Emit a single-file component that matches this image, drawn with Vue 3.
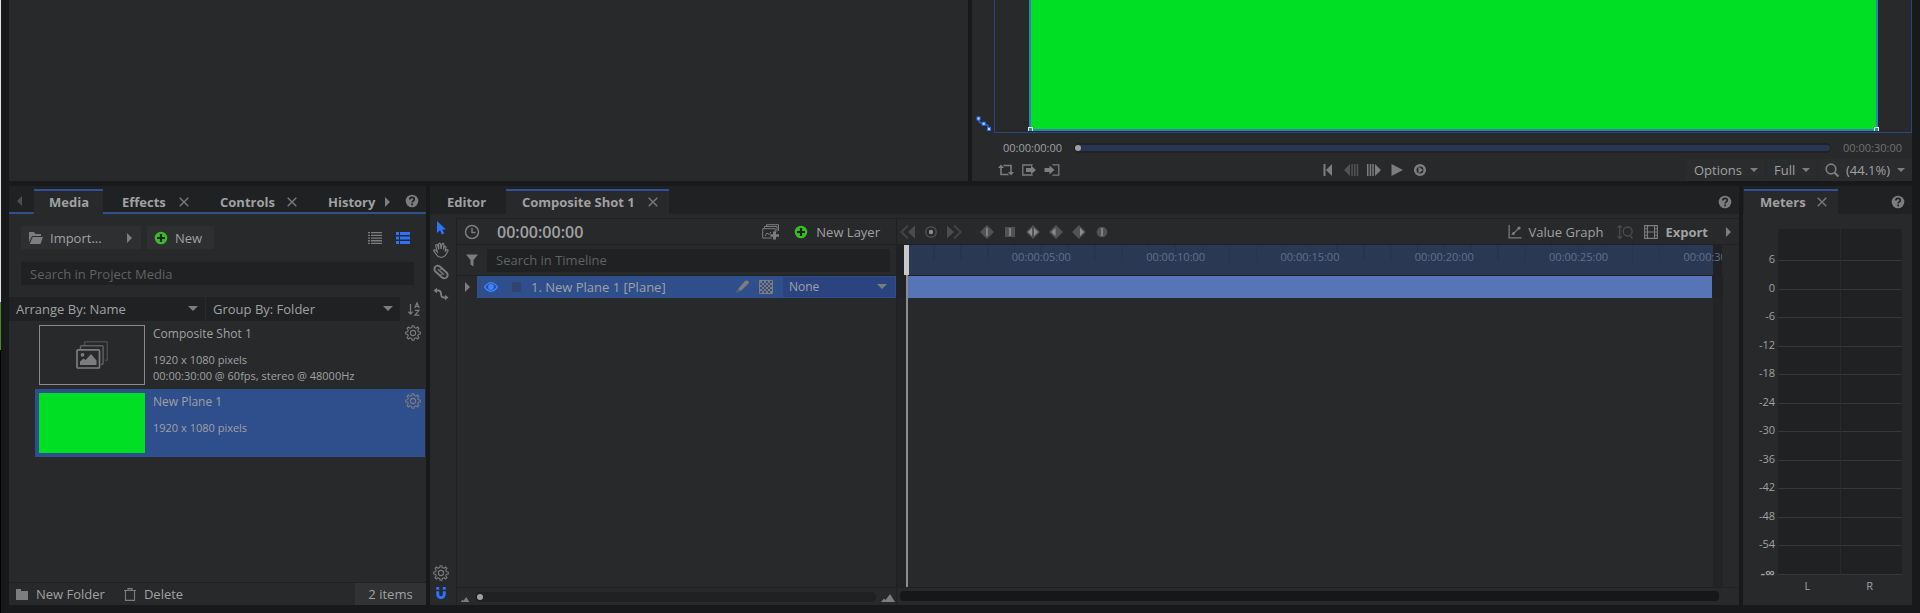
<script setup>
import { ref } from 'vue'

const mediaSearch = ref('')
const layerSearch = ref('')

const tools = ['pointer', 'hand', 'link', 'curve']
const keyIcons = ['key-linear', 'key-hold', 'key-smooth', 'key-in', 'key-out', 'key-auto']
const playIcons = [
  { id: 'to-start', label: 'Go to start' },
  { id: 'step-back', label: 'Previous frame', dim: true },
  { id: 'step-forward', label: 'Next frame' },
  { id: 'play', label: 'Play' },
  { id: 'loop-play', label: 'Playback mode' },
]
const rangeIcons = ['loop', 'set-in', 'set-out']
const rulerTimes = ['00:00:05:00', '00:00:10:00', '00:00:15:00', '00:00:20:00', '00:00:25:00', '00:00:30:00']
const levels = ['6', '0', '-6', '-12', '-18', '-24', '-30', '-36', '-42', '-48', '-54', '-∞']
</script>

<template>
  <svg class="defs" aria-hidden="true">
    <symbol id="caret-right" viewBox="0 0 6 10"><path d="M0 0 5 5 0 10z" /></symbol>
    <symbol id="caret-left" viewBox="0 0 6 10"><path d="M5 0 0 5 5 10z" /></symbol>
    <symbol id="caret-down" viewBox="0 0 10 6"><path d="M0 0h10L5 5z" /></symbol>
    <symbol id="close" viewBox="0 0 10 10"><path d="m.7.7 8.6 8.6m0-8.6L.7 9.3" fill="none" stroke="currentColor" stroke-width="1.4" /></symbol>
    <symbol id="help" viewBox="0 0 14 14"><circle cx="7" cy="7" r="6.3" /><path d="M4.8 5.5c0-3 4.5-2.8 4.5-.3 0 1.7-2.2 1.6-2.2 3.4M7.1 9.6v1.7" fill="none" stroke="#1f2123" stroke-width="1.7" /></symbol>
    <symbol id="plus" viewBox="0 0 14 14"><circle cx="7" cy="7" r="6.3" fill="#3cb928" /><path d="M7 3v8M3 7h8" fill="none" stroke="#1d2420" stroke-width="2.2" /></symbol>
    <symbol id="gear" viewBox="0 0 16 16">
      <g fill="none" stroke="currentColor" stroke-width="1.1" stroke-linejoin="round">
        <path d="M6.8 2.6 7 .7h2l.2 1.9 1.8.7L12.500 2 14 3.500l-1.300 1.500.7 1.800 1.900.2v2l-1.900.2-.7 1.800 1.300 1.500-1.500 1.500-1.500-1.300-1.800.7L9 15.300H7l-.2-1.900-1.800-.7L3.500 14 2 12.500 3.300 11l-.7-1.800L.7 9V7l1.900-.2L3.300 5 2 3.500 3.500 2 5 3.300z" />
        <circle cx="8" cy="8" r="2.6" />
      </g>
    </symbol>
    <symbol id="folder-open" viewBox="0 0 14 12"><path d="M0 0h5l1.500 2H12v2H3L0 10zM3.700 5H14l-2.500 7H.7z" /></symbol>
    <symbol id="folder" viewBox="0 0 12 11"><path d="M0 0h5v2h7v9H0z" /></symbol>
    <symbol id="trash" viewBox="0 0 12 13"><path d="M0 2.500h12M4 2.500V.6h4v1.900M1.500 2.500v9.900h9V2.500" fill="none" stroke="currentColor" stroke-width="1.1" /></symbol>
    <symbol id="list" viewBox="0 0 14 12"><path d="M0 0h2v1.300H0zM3 0h11v1.300H3zM0 2.700h2V4H0zM3 2.700h11V4H3zM0 5.400h2v1.300H0zM3 5.400h11v1.300H3zM0 8.100h2v1.300H0zM3 8.100h11v1.300H3zM0 10.700h2V12H0zM3 10.700h11V12H3z" /></symbol>
    <symbol id="rows" viewBox="0 0 14 12"><path d="M0 0h3v3H0zM4 0h10v3H4zM0 4.500h3v3H0zM4 4.500h10v3H4zM0 9h3v3H0zM4 9h10v3H4z" /></symbol>
    <symbol id="sort" viewBox="0 0 12 14"><path d="M2.500 2v10M.3 9.700l2.200 2.500 2.200-2.500M6.800 6 9 .8 11.200 6M7.500 4.400h3M7 8.300h4l-4 4.900h4.300" fill="none" stroke="currentColor" stroke-width="1.2" /></symbol>
    <symbol id="comp" viewBox="0 0 32 28">
      <g fill="none" stroke="currentColor">
        <path d="M8.500 4.500V1.700q0-1 1-1h20.800q1 0 1 1v16.600q0 1-1 1H29" opacity=".4" stroke-width="1.5" />
        <path d="M4.500 8V5.700q0-1 1-1h20.600q1 0 1 1v16.600q0 1-1 1H25" opacity=".65" stroke-width="1.5" />
        <rect x="1" y="8.800" width="22.500" height="18.200" rx="1" stroke-width="1.7" />
      </g>
      <circle cx="6.500" cy="13.800" r="1.9" /><path d="M4 24v-3.500l3.500-3 2 1.500 5.500-6 5.500 6.500V24z" />
    </symbol>
    <symbol id="pointer" viewBox="0 0 16 16"><path d="M4 1v12l3-2.700 1.800 4.200 2.400-1-1.900-4H13z" /></symbol>
    <symbol id="hand" viewBox="0 0 16 16"><path d="M5 14.500C3.800 12.800 2.200 11.200.9 9.200c-.6-1.300 1-1.900 1.900-.8l1.500 1.500-1.500-6c-.3-1.500 1.400-1.900 1.800-.5l1.200 3.800-.2-5c0-1.500 1.900-1.500 2 0l.3 4.800L9 2.300c.3-1.400 2-1.200 1.900.2l-.5 5 .8-2.600c.5-1.300 2-.7 1.700.6l-.8 4.100 1.200-1.500c1-.9 2.200 0 1.500 1.100l-2.600 4.500c-1.200 1.500-4 2-7.200.8z" fill="none" stroke="currentColor" stroke-width="1.2" /></symbol>
    <symbol id="link" viewBox="0 0 16 16"><g fill="none" stroke="currentColor" transform="rotate(42 8 8)"><rect x=".2" y="4.700" width="15.600" height="6.600" rx="3.300" stroke-width="1.9" /><path d="M3.800 8h8.400" stroke-width="1.5" /><path d="M6.200 4.500v2.300M9.800 9.200v2.300" stroke-width="1.2" /></g></symbol>
    <symbol id="curve" viewBox="0 0 16 16"><path d="M2.500 4.500h2.800q2 0 2.500 2l.5 3q.5 2 2.500 2h2" fill="none" stroke="currentColor" stroke-width="1.9" /><path d="M4 1.800v5.400L.5 4.500zM12 8.800v5.400l3.500-2.700z" /></symbol>
    <symbol id="magnet" viewBox="0 0 12 14"><path d="M2.500 4.500V8a3.500 3.500 0 0 0 7 0V4.500" fill="none" stroke="currentColor" stroke-width="3.2" /><path d="M.9 0h3.200v3H.9zM7.900 0h3.200v3H7.900z" /></symbol>
    <symbol id="clock" viewBox="0 0 16 16"><circle cx="8" cy="8" r="6.500" fill="none" stroke="currentColor" stroke-width="1.5" /><path d="M8 4v4.500h3.500" fill="none" stroke="currentColor" stroke-width="1.4" /></symbol>
    <symbol id="filter" viewBox="0 0 12 12"><path d="M0 0h12L7.500 5.500V12L4.500 10V5.500z" /></symbol>
    <symbol id="comp-add" viewBox="0 0 18 16"><path d="M4.500 2.500V.7h12v6M2.500 4.500v-2H15v5M9.500 14H.7V4.700h12.500V8M3 12l2-3 2 1.500L9 8" fill="none" stroke="currentColor" stroke-width="1" /><path d="M11 7.500h3v2.700h3v2.600h-3v2.700h-3v-2.700H8.300v-2.600H11z" /></symbol>
    <symbol id="eye" viewBox="0 0 14 10"><path d="M.6 5Q7-3.700 13.400 5 7 13.700.6 5z" fill="none" stroke="currentColor" stroke-width="1.3" /><circle cx="7" cy="5" r="2.9" /></symbol>
    <symbol id="brush" viewBox="0 0 14 14"><path d="m3 9 6.500-7.500Q11-.3 13 .8q1.600 1.500.2 3L5.800 11z" /><path d="m0 13.500 3-4.500 2.800 2z" opacity=".4" /></symbol>
    <symbol id="checker" viewBox="0 0 14 14">
      <path d="M.5.5h13v13H.5z" fill="none" stroke="currentColor" />
      <path d="M1 2h12M1 6h12M1 10h12" stroke="currentColor" stroke-width="2" stroke-dasharray="2 2" />
      <path d="M3 4h10M3 8h10M3 12h10" stroke="currentColor" stroke-width="2" stroke-dasharray="2 2" />
    </symbol>
    <symbol id="keys-prev" viewBox="0 0 16 16"><path d="M15 1.500v13L8 8z" /><path d="M8 1.500 1.500 8 8 14.500" fill="none" stroke="currentColor" stroke-width="2.4" opacity=".7" /></symbol>
    <symbol id="keys-next" viewBox="0 0 16 16"><path d="M1 1.500v13L8 8z" /><path d="M8 1.500 14.500 8 8 14.500" fill="none" stroke="currentColor" stroke-width="2.4" opacity=".7" /></symbol>
    <symbol id="keys-set" viewBox="0 0 16 16"><circle cx="8" cy="8" r="5.300" fill="none" stroke="currentColor" stroke-width="1.6" /><circle cx="8" cy="8" r="2.2" fill="#8c8d8e" /></symbol>
    <symbol id="key-linear" viewBox="0 0 16 16"><path d="m8 1 7 7-7 7-7-7z" /><path d="M7.200 4h1.600v8H7.200z" fill="#8c8d8e" /></symbol>
    <symbol id="key-hold" viewBox="0 0 16 16"><path d="M3 3h10v10H3z" /><path d="M7.200 4h1.600v8H7.200z" fill="#8c8d8e" /></symbol>
    <symbol id="key-smooth" viewBox="0 0 16 16"><path d="m8 1 7 7-7 7-7-7z" /><path d="M7 4v8L3 8zM9 4v8l4-4z" fill="#8c8d8e" /></symbol>
    <symbol id="key-in" viewBox="0 0 16 16"><path d="m8 1 7 7-7 7-7-7z" /><path d="M7.500 4v8l-4-4z" fill="#8c8d8e" /></symbol>
    <symbol id="key-out" viewBox="0 0 16 16"><path d="m8 1 7 7-7 7-7-7z" /><path d="M9 4v8l4-4z" fill="#8c8d8e" /></symbol>
    <symbol id="key-auto" viewBox="0 0 16 16"><circle cx="8" cy="8" r="5.3" /><path d="M7.200 4h1.600v8H7.200z" fill="#8c8d8e" /></symbol>
    <symbol id="graph" viewBox="0 0 14 15"><path d="M.7 0v13.700H14M3.500 10.500l2.300-1.800 5-5" fill="none" stroke="currentColor" stroke-width="1.3" /><circle cx="5.500" cy="9" r="1.5" /><circle cx="11.300" cy="3.300" r="1.8" /></symbol>
    <symbol id="fit" viewBox="0 0 15 14"><path d="M2.500 1v12M.4 3l2.100-2 2.100 2M.4 11l2.100 2 2.100-2M12.500 10.500l2 2.700" fill="none" stroke="currentColor" stroke-width="1.2" /><circle cx="10" cy="6.500" r="4.200" fill="none" stroke="currentColor" stroke-width="1.3" /></symbol>
    <symbol id="film" viewBox="0 0 14 14"><path d="M.6.6h12.800v12.800H.6zM3.500.5v13M10.500.5v13M3.500 7h7M.5 3.800h3M.5 7h3M.5 10.200h3M10.500 3.800h3M10.500 7h3M10.500 10.200h3" fill="none" stroke="currentColor" stroke-width="1.1" /></symbol>
    <symbol id="hill" viewBox="0 0 14 8"><path d="M0 8 3 4.500 4.500 6 9 0l5 8z" /></symbol>
    <symbol id="loop" viewBox="0 0 16 14"><path d="M5.500 2.500H13v7M10.500 11.500H3v-7" fill="none" stroke="currentColor" stroke-width="1.6" /><path d="M0 5 3 1.500 6 5zM10 9l3 3.500L16 9z" /></symbol>
    <symbol id="set-in" viewBox="0 0 16 14"><path d="M11 2.800V2H1.800v10H11v-.8" fill="none" stroke="currentColor" stroke-width="1.3" /><path d="M5 5h5V2.500L15 7l-5 4.500V9H5z" /></symbol>
    <symbol id="set-out" viewBox="0 0 16 14"><path d="M8.500 1.800h6.300v10.400H8.500" fill="none" stroke="currentColor" stroke-width="1.3" /><path d="M.5 5h5V2.500l5 4.500-5 4.500V9h-5z" /></symbol>
    <symbol id="to-start" viewBox="0 0 16 16"><path d="M3.500 2h2v12h-2zM12 2v12L6 8z" /></symbol>
    <symbol id="step-back" viewBox="0 0 16 16"><path d="M7 2v12L1 8zM8.300 2h1.500v12H8.300zM11 2h1.500v12H11zM13.700 2h1.500v12h-1.500z" /></symbol>
    <symbol id="step-forward" viewBox="0 0 16 16"><path d="M9 2v12l6-6zM1 2h1.500v12H1zM3.700 2h1.500v12H3.700zM6.300 2h1.500v12H6.300z" /></symbol>
    <symbol id="play" viewBox="0 0 16 16"><path d="M2.500 2v12L14 8z" /></symbol>
    <symbol id="loop-play" viewBox="0 0 16 16"><circle cx="8" cy="8" r="4.800" fill="none" stroke="currentColor" stroke-width="2.6" /><path d="M6.500 4.800v6.400L11 8z" /></symbol>
    <symbol id="magnifier" viewBox="0 0 14 14"><circle cx="6" cy="6" r="4.800" fill="none" stroke="currentColor" stroke-width="1.7" /><path d="m9.500 9.500 4 4" stroke="currentColor" stroke-width="2.2" /></symbol>
    <symbol id="motion" viewBox="0 0 16 16"><path d="M2.500 2.500q0 5 5 5.300t5.500 5" fill="none" stroke="#2d62cc" stroke-width="1.5" /><path d="M.5.500h4v4h-4zM5.700 5.700h4v4h-4zM11 11h4v4h-4z" fill="#2d72ff" /><path d="M1.500 1.500h2v2h-2zM6.700 6.700h2v2h-2zM12 12h2v2h-2z" fill="#b8d8ff" /></symbol>
  </svg>

  <main class="app">
    <div class="edge"><i></i><i></i><i></i></div>

    <div class="upper">
      <section class="panel"></section>
      <section class="panel viewer">
        <div class="stage">
          <svg class="motion" viewBox="0 0 16 16"><use href="#motion" /></svg>
          <div class="frame">
            <div class="canvas"><i class="handle start"></i><i class="handle end"></i></div>
          </div>
        </div>
        <div class="scrub">
          <time>00:00:00:00</time>
          <div class="scrub-track"><input type="range" min="0" max="1800" value="0" aria-label="Playhead" /></div>
          <time class="dim">00:00:30:00</time>
        </div>
        <div class="transport">
          <div class="range-set">
            <button v-for="id in rangeIcons" :key="id" :aria-label="id"><svg class="i16" viewBox="0 0 16 14"><use :href="'#' + id" /></svg></button>
          </div>
          <div class="play-set">
            <button v-for="p in playIcons" :key="p.id" :aria-label="p.label" :class="{ faint: p.dim }"><svg class="i16"><use :href="'#' + p.id" /></svg></button>
          </div>
          <div class="view-set">
            <button class="v-options">Options <svg class="down"><use href="#caret-down" /></svg></button>
            <div class="pick v-full">
              <select aria-label="Quality"><option>Full</option></select>
              <svg class="down"><use href="#caret-down" /></svg>
            </div>
            <div class="pick v-zoom">
              <svg class="i14"><use href="#magnifier" /></svg>
              <select aria-label="Zoom"><option>(44.1%)</option></select>
              <svg class="down"><use href="#caret-down" /></svg>
            </div>
          </div>
        </div>
      </section>
    </div>

    <div class="lower">
      <section class="panel media">
        <nav class="tabs lined">
          <button class="scroll" aria-label="Scroll tabs left"><svg class="right"><use href="#caret-left" /></svg></button>
          <button class="tab active t-media">Media</button>
          <button class="tab t-effects">Effects <svg class="x"><use href="#close" /></svg></button>
          <button class="tab t-controls">Controls <svg class="x"><use href="#close" /></svg></button>
          <button class="tab t-history">History <svg class="right"><use href="#caret-right" /></svg></button>
          <button class="help" aria-label="Help"><svg class="i14"><use href="#help" /></svg></button>
        </nav>
        <div class="actions">
          <button class="raised import"><svg class="i14"><use href="#folder-open" /></svg>Import...<svg class="right"><use href="#caret-right" /></svg></button>
          <button class="raised new"><svg class="i14"><use href="#plus" /></svg>New</button>
          <button class="view" aria-label="List view"><svg class="i14"><use href="#list" /></svg></button>
          <button class="view on" aria-label="Thumbnail view"><svg class="i14"><use href="#rows" /></svg></button>
        </div>
        <input v-model="mediaSearch" class="search media-search" placeholder="Search in Project Media" aria-label="Search in Project Media" />
        <div class="sorting">
          <div class="pick"><select aria-label="Arrange by"><option>Arrange By: Name</option></select><svg class="down"><use href="#caret-down" /></svg></div>
          <div class="pick"><select aria-label="Group by"><option>Group By: Folder</option></select><svg class="down"><use href="#caret-down" /></svg></div>
          <button aria-label="Sort order"><svg class="sort-icon"><use href="#sort" /></svg></button>
        </div>
        <ul class="items">
          <li>
            <div class="thumb outlined"><svg class="comp-icon"><use href="#comp" /></svg></div>
            <div class="info"><h3>Composite Shot 1</h3><p>1920 x 1080 pixels</p><p>00:00:30:00 @ 60fps, stereo @ 48000Hz</p></div>
            <button aria-label="Properties"><svg class="i16"><use href="#gear" /></svg></button>
          </li>
          <li class="selected">
            <div class="thumb green"></div>
            <div class="info"><h3>New Plane 1</h3><p>1920 x 1080 pixels</p></div>
            <button aria-label="Properties"><svg class="i16"><use href="#gear" /></svg></button>
          </li>
        </ul>
        <footer class="media-foot">
          <button><svg class="i12"><use href="#folder" /></svg>New Folder</button>
          <button><svg class="i12"><use href="#trash" /></svg>Delete</button>
          <span>2 items</span>
        </footer>
      </section>

      <section class="panel editor">
        <nav class="tabs">
          <button class="tab t-editor">Editor</button>
          <button class="tab active t-shot">Composite Shot 1 <svg class="x"><use href="#close" /></svg></button>
          <button class="help" aria-label="Help"><svg class="i14"><use href="#help" /></svg></button>
        </nav>
        <div class="work">
          <aside class="tools">
            <button v-for="t in tools" :key="t" :aria-label="t" :class="{ on: t === 'pointer' }"><svg class="i16"><use :href="'#' + t" /></svg></button>
            <button class="bottom" aria-label="Settings"><svg class="i16"><use href="#gear" /></svg></button>
            <button class="on" aria-label="Snapping"><svg class="i12"><use href="#magnet" /></svg></button>
          </aside>

          <div class="layers">
            <div class="bar layer-bar">
              <svg class="i16"><use href="#clock" /></svg>
              <time class="now">00:00:00:00</time>
              <button aria-label="Make composite shot"><svg class="comp-add"><use href="#comp-add" /></svg></button>
              <button class="new-layer"><svg class="i14"><use href="#plus" /></svg>New Layer</button>
            </div>
            <div class="find">
              <button aria-label="Filter"><svg class="i12"><use href="#filter" /></svg></button>
              <input v-model="layerSearch" class="search" placeholder="Search in Timeline" aria-label="Search in Timeline" />
            </div>
            <div class="layer">
              <button class="expand" aria-label="Expand layer"><svg class="right"><use href="#caret-right" /></svg></button>
              <div class="layer-main">
                <button class="eye" aria-label="Visible"><svg><use href="#eye" /></svg></button>
                <i class="swatch"></i>
                <span class="layer-name">1. New Plane 1 [Plane]</span>
                <svg class="i14 warm"><use href="#brush" /></svg>
                <svg class="i14 warm"><use href="#checker" /></svg>
                <div class="pick parent"><select aria-label="Parent layer"><option>None</option></select><svg class="down"><use href="#caret-down" /></svg></div>
              </div>
            </div>
            <div class="zoom-bar">
              <svg class="hill small"><use href="#hill" /></svg>
              <div class="groove"><input type="range" min="0" max="100" value="0" aria-label="Timeline zoom" /></div>
              <svg class="hill"><use href="#hill" /></svg>
            </div>
          </div>

          <div class="timeline">
            <div class="bar key-bar">
              <button aria-label="Previous keyframe"><svg class="i16"><use href="#keys-prev" /></svg></button>
              <button aria-label="Add keyframe"><svg class="i16"><use href="#keys-set" /></svg></button>
              <button aria-label="Next keyframe"><svg class="i16"><use href="#keys-next" /></svg></button>
              <span class="key-types"><button v-for="k in keyIcons" :key="k" :aria-label="k"><svg class="i16"><use :href="'#' + k" /></svg></button></span>
              <button class="graph"><svg class="i14"><use href="#graph" /></svg>Value Graph</button>
              <button class="fit" aria-label="Fit graph"><svg class="i16"><use href="#fit" /></svg></button>
              <button class="export"><svg class="i14"><use href="#film" /></svg>Export</button>
              <button class="more" aria-label="Export options"><svg class="right"><use href="#caret-right" /></svg></button>
            </div>
            <div class="ruler">
              <div class="span">
                <svg class="ticks" viewBox="0 0 30 1" preserveAspectRatio="none"><path v-for="n in 29" :key="n" :d="`M${n} 0v1`" /></svg>
                <span v-for="t in rulerTimes" :key="t">{{ t }}</span>
              </div>
            </div>
            <div class="track"><div class="clip"></div></div>
            <div class="rest"></div>
            <div class="hscroll"><i></i></div>
            <div class="playhead"></div>
          </div>
        </div>
      </section>

      <section class="panel meters">
        <nav class="tabs">
          <button class="tab active t-meters">Meters <svg class="x"><use href="#close" /></svg></button>
          <button class="help" aria-label="Help"><svg class="i14"><use href="#help" /></svg></button>
        </nav>
        <div class="meter">
          <div v-for="l in levels" :key="l" class="level"><span>{{ l }}</span><i></i><i></i></div>
        </div>
        <div class="channels"><span>L</span><span>R</span></div>
      </section>
    </div>
  </main>
</template>

<style>
html, body { background: #17191b; }
</style>

<style scoped>
* { box-sizing: border-box; }
.defs { position: absolute; width: 0; height: 0; }
.app {
  position: relative;
  display: grid;
  grid-template-rows: minmax(0, 181fr) minmax(0, 419fr);
  gap: 5px;
  height: 100vh;
  min-height: 600px;
  padding: 0 8px 8px 9px;
  overflow: hidden;
  background: #17191b;
  color: #a0a1a2;
  font: 13px/18px "Open Sans", "Noto Sans", sans-serif;
}
.edge { position: absolute; inset: 0 auto 0 0; width: 1px; display: flex; flex-direction: column; }
.edge i { flex: 302; background: #dde3e6; }
.edge i:nth-child(2) { flex: 48; background: #4a8c14; }
.edge i:nth-child(3) { flex: 263; background: #000; }
svg { display: block; flex: none; fill: currentColor; }
.i12 { width: 12px; height: 13px; }
.i14 { width: 14px; height: 14px; }
.i16 { width: 16px; height: 16px; }
.right { width: 6px; height: 10px; }
.down { width: 10px; height: 6px; }
.x { width: 10px; height: 10px; color: #77797a; }
button, select, input { margin: 0; padding: 0; border: 0; background: none; color: inherit; font: inherit; }
button { display: flex; align-items: center; white-space: nowrap; }
button svg { color: #7b7d7e; }
select { appearance: none; min-width: 0; flex: 1; height: 100%; outline: 0; }
.pick { display: flex; align-items: center; min-width: 0; }
.pick svg { color: #7b7d7e; }
.faint { opacity: .5; }
.on svg { color: #2d72ff; }
.panel { display: flex; flex-direction: column; min-width: 0; min-height: 0; background: #27292b; }
.upper { display: grid; grid-template-columns: 959fr 940fr; gap: 4px; }
.lower { display: grid; grid-template-columns: 417fr 1309fr 169fr; gap: 4px; }

.stage { flex: 1; display: flex; min-height: 0; }
.motion { align-self: flex-end; width: 16px; height: 16px; margin: 0 2px 1px 4px; }
.frame { flex: 1; display: flex; padding: 0 33px 1px 34px; border: 1px solid #2c457d; border-top: 0; }
.canvas { position: relative; flex: 1; background: #00df23; border: 2px solid #2f83b5; border-top: 0; }
.handle { position: absolute; bottom: -2px; width: 5px; height: 4px; border: 1px solid #e4efe4; border-bottom: 0; }
.start { left: -3px; }
.end { right: -3px; }
.scrub { display: flex; align-items: center; height: 26px; margin: 0 10px 0 31px; padding-top: 4px; font-size: 11px; line-height: 14px; }
.scrub .dim { color: #707273; }
.scrub-track { flex: 1; height: 10px; margin: 0 12px; padding: 2px 1px; border-radius: 5px; background: #202224; }
input[type=range] { appearance: none; display: block; width: 100%; height: 6px; border-radius: 3px; background: #283654; }
input[type=range]::-webkit-slider-thumb { appearance: none; width: 6px; height: 6px; border-radius: 50%; background: #a0a0a0; }
.transport { display: grid; grid-template-columns: 344fr 370fr 226px; height: 22px; }
.range-set { display: flex; gap: 7px; padding-left: 26px; }
.play-set { display: flex; gap: 7px; padding-left: 4px; }
.view-set { display: flex; gap: 1px; }
.view-set > * { justify-content: space-between; background: #2a2c2e; }
.view-set .down { width: 8px; height: 5px; }
.v-options { width: 79px; padding: 0 7px 0 8px; }
.v-full { width: 51px; padding: 0 7px 0 8px; }
.v-zoom { flex: 1; gap: 7px; padding: 0 7px; }

.tabs { display: flex; height: 28px; padding-top: 3px; background: #1f2123; font-weight: 700; }
.tab { justify-content: space-between; padding-bottom: 2px; border-top: 2px solid transparent; }
.tab.active { background: #27292b; border-top-color: #31509a; }
.lined { display: grid; grid-template-columns: 25fr 69fr 98fr 98fr 94fr 33fr; }
.lined > * { padding-bottom: 0; border-bottom: 2px solid #31508f; }
.lined > .active { border-bottom-color: #27292b; }
.scroll { padding-left: 8px; }
.scroll svg { opacity: .5; }
.t-media { padding-left: 15px; }
.t-effects { padding-left: 19px; padding-right: 12px; }
.t-controls { padding-left: 19px; padding-right: 2px; }
.t-history { padding-left: 29px; padding-right: 2px; }
.help { justify-content: flex-end; padding-right: 7px; }
.actions { display: flex; align-items: center; height: 23px; margin: 12px 16px 0 12px; }
.raised { height: 23px; background: #2d2f31; }
.import { width: 120px; gap: 7px; padding-left: 8px; margin-right: 6px; }
.import .right { margin-left: auto; margin-right: 8px; }
.new { width: 67px; gap: 7px; padding-left: 7px; margin-right: auto; }
.view { margin-left: 14px; }
.search { min-width: 0; height: 23px; padding: 0 9px; background: #1f2123; outline: 0; }
.search::placeholder { color: #606263; opacity: 1; }
.media-search { margin: 13px 12px 0; }
.sorting { display: grid; grid-template-columns: 196fr 194fr 25px; gap: 1px; height: 24px; margin-top: 12px; }
.sorting .pick { padding: 0 7px; background: #1f2123; }
.sorting button { justify-content: center; }
.sort-icon { width: 12px; height: 14px; }
.items { flex: 1; margin: 0; padding: 0 1px 0 26px; list-style: none; }
.items li { display: flex; height: 68px; padding: 4px; font-size: 11px; line-height: 16px; }
.items .selected { background: #2f4e8c; }
.items li > button { align-self: flex-start; margin-left: auto; }
.thumb { width: 106px; height: 60px; margin-right: 8px; display: grid; place-items: center; }
.outlined { border: 1px solid #8a8a8a; color: #7b7d7e; }
.comp-icon { width: 32px; height: 28px; }
.green { background: #00df23; }
.info { white-space: nowrap; }
.items h3 { margin: 0 0 9px; font-size: 12px; line-height: 18px; font-weight: 400; }
.items p { margin: 0; }
.media-foot { display: flex; align-items: stretch; height: 23px; border-top: 1px solid #1f2123; }
.media-foot button { gap: 8px; padding-left: 7px; margin-right: 12px; }
.media-foot span { width: 71px; margin-left: auto; background: #303234; text-align: center; line-height: 22px; }

.t-editor { width: 76px; padding-left: 17px; }
.t-shot { width: 163px; padding-left: 16px; padding-right: 11px; }
.editor .help { flex: 1; }
.work { flex: 1; display: grid; grid-template-columns: 26px 440fr 843fr; min-height: 0; padding-top: 4px; }
.tools { display: flex; flex-direction: column; align-items: center; gap: 6px; padding: 2px 5px 5px 1px; }
.tools .bottom { margin-top: auto; }
.layers, .timeline { display: flex; flex-direction: column; min-width: 0; border-top: 1px solid #1f2123; border-left: 1px solid #1f2123; }
.bar { display: flex; align-items: center; height: 26px; border-bottom: 1px solid #1f2123; }
.layer-bar { padding: 0 16px 0 7px; }
.layer-bar svg { color: #7b7d7e; }
.now { margin: 0 auto 0 17px; font-size: 16px; font-weight: 600; }
.comp-add { width: 18px; height: 16px; }
.new-layer { gap: 8px; margin-left: 14px; }
.find { display: flex; align-items: center; gap: 9px; height: 31px; padding: 0 6px 0 9px; border-bottom: 1px solid #1f2123; }
.find .search { flex: 1; }
.layer { display: flex; height: 22px; }
.expand { width: 20px; padding-left: 8px; }
.layer-main { flex: 1; display: flex; align-items: center; min-width: 0; background: #2f4e8c; }
.eye { margin: 0 14px 0 7px; }
.eye svg { width: 14px; height: 10px; color: #3d83ff; }
.swatch { width: 9px; height: 10px; margin-right: 10px; background: #31446f; }
.layer-name { flex: 1; white-space: nowrap; }
.warm { color: #807d78; margin-right: 10px; }
.parent { width: 112px; height: 20px; padding: 0 8px 0 6px; margin-right: 1px; background: #2b4480; font-size: 12px; }
.zoom-bar { display: flex; align-items: center; gap: 5px; height: 18px; margin-top: auto; padding: 0 1px 0 3px; border-top: 1px solid #1f2123; color: #7b7d7e; }
.groove { flex: 1; height: 10px; padding: 2px; border-radius: 5px; background: #1f2123; }
.groove input { background: none; }
.hill { width: 14px; height: 8px; align-self: flex-end; margin-bottom: 3px; }
.small { width: 10px; height: 5px; }

.timeline { position: relative; }
.key-bar { padding: 0 7px 0 3px; gap: 7px; }
.key-types svg { color: #505254; }
.key-bar > button:nth-child(-n+3) svg { color: #4a4c4e; }
.key-types { display: flex; gap: 7px; margin: 0 auto 0 10px; }
.graph { gap: 7px; }
.fit { margin: 0 4px 0 7px; }
.fit svg { color: #4a4c4e; }
.export { gap: 7px; margin-right: 11px; font-weight: 700; }
.ruler { height: 31px; margin-right: 17px; padding: 0 9px 0 10px; overflow: hidden; background: #1f2123; border-bottom: 1px solid #1f2123; }
.span { position: relative; display: flex; height: 30px; padding-left: 8.333%; background: #2b3854; color: #626f8c; font-size: 11px; line-height: 24px; }
.span span { position: relative; flex: 0 0 18.18%; text-align: center; }
.ticks { position: absolute; inset: 0 0 auto 0; width: 100%; height: 16px; }
.ticks path { stroke: #28344d; stroke-width: 1px; vector-effect: non-scaling-stroke; }
.track { display: flex; height: 22px; margin-right: 16px; padding: 0 11px 0 10px; background: #202224; }
.clip { flex: 1; background: #5774b6; }
.rest { flex: 1; margin-right: 16px; border: solid #222426; border-width: 0 10px; }
.hscroll { height: 18px; padding: 3px 20px 0 3px; border-top: 1px solid #1f2123; }
.hscroll i { display: block; height: 10px; border-radius: 4px; background: #151719; }
.playhead { position: absolute; top: 26px; bottom: 18px; left: 9px; width: 2px; background: #8c8d8e; }
.playhead::before { content: ""; position: absolute; top: 0; left: -2px; width: 5px; height: 30px; background: #c8c8c8; }

.t-meters { width: 94px; padding-left: 16px; padding-right: 11px; margin-left: 1px; }
.meters .help { flex: 1; }
.meter { flex: 1; display: flex; flex-direction: column; margin: 15px 10px 0 4px; font-size: 11px; }
.level { flex: 1; display: grid; grid-template-columns: 31px 1fr 1fr; min-height: 0; }
.level:first-child { flex: 1.12; }
.level i { background: #1f2123; border-bottom: 1px solid #35373a; }
.level i + i { border-left: 1px solid #292b2d; }
.level span { display: flex; align-items: center; justify-content: flex-end; align-self: end; height: 10px; margin-bottom: -3px; padding-right: 3px; }
.level:last-child span { font-size: 14px; font-weight: 600; }
.channels { display: grid; grid-template-columns: 1fr 1fr; height: 30px; margin: 0 11px 0 33px; text-align: center; font-size: 11px; line-height: 21px; }
</style>
